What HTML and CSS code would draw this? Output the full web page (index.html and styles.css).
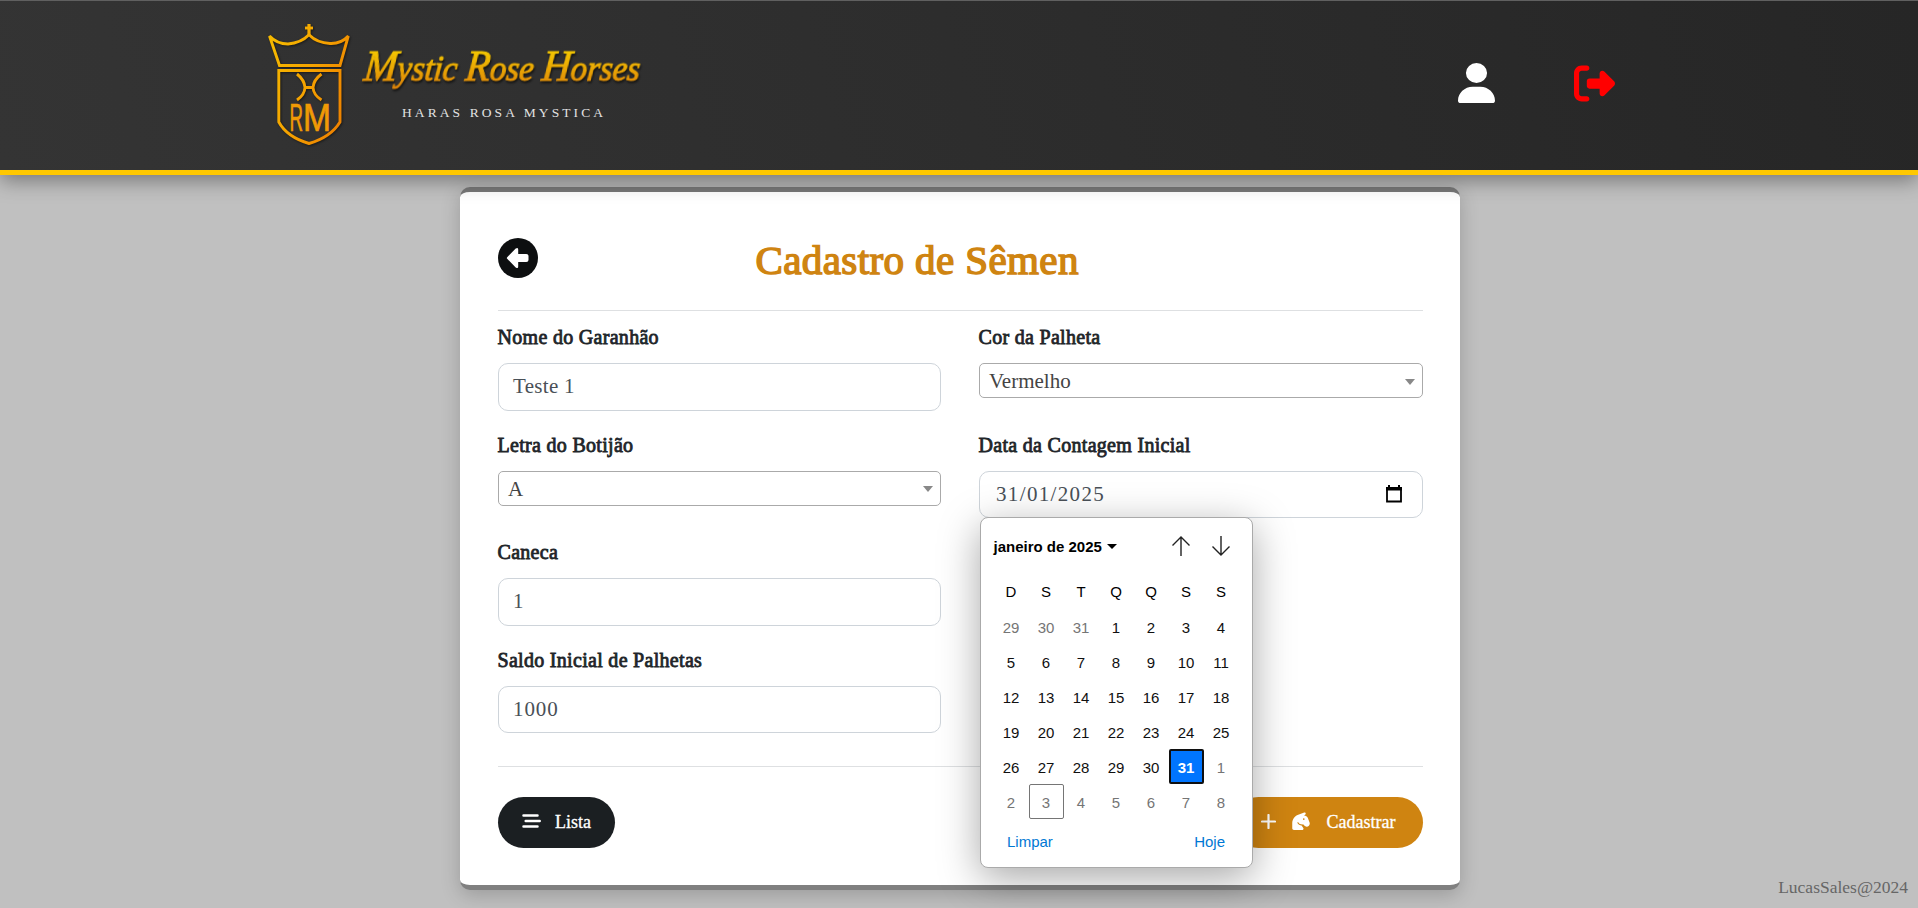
FILE: index.html
```html
<!DOCTYPE html>
<html lang="pt-BR">
<head>
<meta charset="utf-8">
<title>Cadastro de Sêmen</title>
<link rel="stylesheet" href="styles.css">
</head>
<body>
<header class="topbar">
  <svg class="logo" width="400" height="130" viewBox="260 20 400 130">
    <defs>
      <linearGradient id="gold" gradientUnits="userSpaceOnUse" x1="268" y1="60" x2="350" y2="90">
        <stop offset="0" stop-color="#f5b800"/><stop offset="0.5" stop-color="#f5a300"/><stop offset="1" stop-color="#ee8400"/>
      </linearGradient>
      <linearGradient id="goldv" x1="0" y1="0" x2="0" y2="1">
        <stop offset="0.1" stop-color="#f6cf00"/><stop offset="1" stop-color="#dd7f08"/>
      </linearGradient>
    </defs>
    <g class="crest" fill="none" stroke="url(#gold)" stroke-width="2.9">
      <path d="M269.500 36 Q277 44 288 44 Q301 43 309 34.800 Q317 43 330 43.500 Q341 44 348.300 36 L340 65.500 H279.500 Z"/>
      <path d="M278.800 70.500 H340 V122 Q331 137 309 143.500 Q287 137 278.800 122 Z"/>
      <path d="M297 74 Q304.500 80 305 87.500 Q304.500 95 297 100 M321.500 74 Q313.500 80 313 87.500 Q313.500 95 321.500 100 M305 87.500 H313"/>
      <path d="M309 24 V35" stroke-width="3.200"/><path d="M305 28 H313"/>
    </g>
    <text class="monogram" transform="translate(289.500 131) scale(1 1.750)" textLength="13.500" lengthAdjust="spacingAndGlyphs">R</text>
    <text class="monogram" transform="translate(303 131) scale(1 1.750)" textLength="28" lengthAdjust="spacingAndGlyphs">M</text>
    <text class="brand" transform="translate(363 80.500) skewX(-6)" textLength="276" lengthAdjust="spacingAndGlyphs"><tspan class="cap">M</tspan>ystic <tspan class="cap">R</tspan>ose <tspan class="cap">H</tspan>orses</text>
    <text class="tagline" x="402" y="117" textLength="201">HARAS ROSA MYSTICA</text>
  </svg>
  <nav class="actions">
    <svg width="37" height="40" viewBox="0 0 448 512" preserveAspectRatio="none" fill="#fff"><path d="M224 256A128 128 0 1 0 224 0a128 128 0 1 0 0 256zm-45.700 48C79.800 304 0 383.800 0 482.300C0 498.700 13.300 512 29.700 512H418.300c16.400 0 29.700-13.300 29.700-29.700C448 383.800 368.200 304 269.700 304H178.300z"/></svg>
    <svg width="41" height="41" viewBox="0 0 512 512" fill="#f00"><path d="M377.900 105.900L500.700 228.700c7.200 7.200 11.300 17.100 11.300 27.300s-4.100 20.100-11.300 27.300L377.900 406.100c-6.400 6.400-15 9.900-24 9.900c-18.700 0-33.900-15.200-33.900-33.900l0-62.100-128 0c-17.700 0-32-14.300-32-32l0-64c0-17.700 14.300-32 32-32l128 0 0-62.100c0-18.700 15.200-33.900 33.900-33.900c9 0 17.600 3.600 24 9.900zM160 96L96 96c-17.700 0-32 14.300-32 32l0 256c0 17.700 14.300 32 32 32l64 0c17.700 0 32 14.300 32 32s-14.300 32-32 32l-64 0c-53 0-96-43-96-96L0 128C0 75 43 32 96 32l64 0c17.700 0 32 14.300 32 32s-14.300 32-32 32z"/></svg>
  </nav>
</header>

<main class="card">
  <div class="card-head">
    <svg class="back" width="40" height="40" viewBox="0 0 40 40"><circle cx="20" cy="20" r="20" fill="#0d0f10"/><path d="M9.200 19.200 17.700 10.600Q20.200 8.800 20.200 11.500V15.900H28.300Q30.500 15.900 30.500 18V22Q30.500 24.100 28.300 24.100H20.200V28.500Q20.200 31.200 17.700 29.400L9.200 20.800Q8.400 20 9.200 19.200Z" fill="#fff"/></svg>
    <h1 class="title">Cadastro de Sêmen</h1>
  </div>
  <form class="fields">
    <div class="col">
      <div class="field"><label class="label">Nome do Garanhão</label><div class="input">Teste 1</div></div>
      <div class="field"><label class="label">Letra do Botijão</label><div class="select">A</div></div>
      <div class="field"><label class="label">Caneca</label><div class="input">1</div></div>
      <div class="field"><label class="label">Saldo Inicial de Palhetas</label><div class="input short">1000</div></div>
    </div>
    <div class="col">
      <div class="field"><label class="label">Cor da Palheta</label><div class="select">Vermelho</div></div>
      <div class="field"><label class="label">Data da Contagem Inicial</label>
        <div class="input date">31/01/2025
          <svg width="16" height="18" viewBox="0 0 16 18"><path d="M1 3H15V16.500H1Z" fill="none" stroke="#000" stroke-width="1.800"/><path d="M0 2H16V5.500H0ZM2 0H4V3H2ZM12 0H14V3H12Z"/></svg>
        </div>
        <div class="picker">
          <div class="picker-head">
            <span class="month">janeiro de 2025</span><i class="caret"></i>
            <svg class="up" width="18" height="20" viewBox="0 0 18 20"><path d="M9 20V1M.500 9.500 9 1 17.500 9.500"/></svg>
            <svg width="18" height="20" viewBox="0 0 18 20"><path d="M9 0V19M.500 10.500 9 19 17.500 10.500"/></svg>
          </div>
          <div class="week">
            <span>D</span><span>S</span><span>T</span><span>Q</span><span>Q</span><span>S</span><span>S</span>
          </div>
          <div class="days">
            <span class="off">29</span><span class="off">30</span><span class="off">31</span><span>1</span><span>2</span><span>3</span><span>4</span>
            <span>5</span><span>6</span><span>7</span><span>8</span><span>9</span><span>10</span><span>11</span>
            <span>12</span><span>13</span><span>14</span><span>15</span><span>16</span><span>17</span><span>18</span>
            <span>19</span><span>20</span><span>21</span><span>22</span><span>23</span><span>24</span><span>25</span>
            <span>26</span><span>27</span><span>28</span><span>29</span><span>30</span><span class="chosen">31</span><span class="off">1</span>
            <span class="off">2</span><span class="off today">3</span><span class="off">4</span><span class="off">5</span><span class="off">6</span><span class="off">7</span><span class="off">8</span>
          </div>
          <div class="picker-foot"><span>Limpar</span><span>Hoje</span></div>
        </div>
      </div>
    </div>
  </form>
  <div class="card-foot">
    <div class="btn dark">
      <svg width="19" height="14" viewBox="0 0 19 14" stroke="#fff" stroke-width="2.500" stroke-linecap="round"><path d="M1.500 1.500H15.500M3.700 7H17.700M1.500 12.500H15.500"/></svg>
      <span>Lista</span>
    </div>
    <div class="btn gold">
      <svg width="15" height="15" viewBox="0 0 15 15" stroke="#fff" stroke-width="2.200" stroke-linecap="round"><path d="M7.500 1V14M1 7.500H14"/></svg>
      <svg class="horse" width="22.500" height="18" viewBox="0 0 640 512" fill="#fff"><path d="M64 464l0-147.100c0-108.400 68.300-205.100 170.500-241.300L404.200 15.500C425.600 7.900 448 23.800 448 46.400c0 11-5.500 21.200-14.600 27.300L400 96c48.100 0 91.200 29.800 108.100 74.900l48.600 129.500c11.800 31.400 4.100 66.800-19.600 90.500c-16 16-37.800 25.100-60.500 25.100l-3.400 0c-26.100 0-50.900-11.600-67.600-31.500l-32.300-38.700c-11.700 4.100-24.200 6.400-37.300 6.400c-6.300 0-12.500-.500-18.600-1.500c-3.600-.600-7.200-1.400-10.700-2.300c-28.900-7.800-53.100-26.800-67.800-52.200c-4.400-7.600-14.200-10.300-21.900-5.800s-10.300 14.200-5.800 21.900c24 41.500 68.300 70 119.300 71.900l47.200 70.800c4 6.100 6.200 13.200 6.200 20.400c0 20.300-16.500 36.800-36.800 36.800L112 512c-26.500 0-48-21.500-48-48zM392 224a24 24 0 1 0 0-48 24 24 0 1 0 0 48z"/></svg>
      <span>Cadastrar</span>
    </div>
  </div>
</main>
<footer class="credit">LucasSales@2024</footer>
</body>
</html>
```
FILE: styles.css
```css
* { box-sizing: border-box; }
body {
  margin: 0;
  height: 908px;
  overflow: hidden;
  background: #c0c0c0;
  font-family: "Liberation Serif", serif;
  color: #212529;
}
.topbar {
  position: relative;
  height: 175px;
  display: flex;
  justify-content: space-between;
  align-items: flex-start;
  padding: 19px 303px 0 260px;
  border-top: 1px solid #606060;
  border-bottom: 5px solid #ffc800;
  background: linear-gradient(75deg, #343434, #262626);
  box-shadow: 0 5px 20px rgba(0, 0, 0, .4);
  z-index: 1;
}
.crest { filter: drop-shadow(1px 1px 1px #1a1a1a); }
.brand {
  font: italic 400 36px "Liberation Serif", serif;
  fill: url(#goldv);
  stroke: url(#goldv);
  stroke-width: 1.100px;
  filter: drop-shadow(1px 2px 1px #111);
}
.cap { font-size: 44px; }
.monogram { font: 22px "Liberation Sans", sans-serif; fill: #f09a05; stroke: #f09a05; stroke-width: .400px; }
.tagline { font: 13.500px "Liberation Serif", serif; fill: #e2e2e2; }
.actions { display: flex; gap: 79px; padding-top: 43px; }

.card {
  width: 1000px;
  height: 703px;
  margin: 12px 0 0 460px;
  padding: 0 37px 0 38px;
  background: #fff;
  border-top: 5px solid #787878;
  border-bottom: 5px solid #808080;
  border-radius: 10px;
  box-shadow: 0 5px 20px rgba(0, 0, 0, .2);
}
.card-head {
  display: flex;
  height: 119px;
  padding-top: 46px;
  border-bottom: 1px solid #dee0e2;
}
.back { margin-left: -.500px; }
.title {
  margin: -1px 0 0 218px;
  font-size: 41px;
  line-height: 46px;
  font-weight: 400;
  letter-spacing: .400px;
  color: #cf8411;
  -webkit-text-stroke: 1.500px #cf8411;
}
.fields {
  display: grid;
  grid-template-columns: 443px 444px;
  column-gap: 38px;
  height: 455px;
  padding-top: 11px;
}
.col { display: grid; grid-auto-rows: 107.700px; align-content: start; }
.field { position: relative; }
.label {
  display: block;
  height: 30px;
  margin-bottom: 11px;
  font-size: 20px;
  line-height: 31px;
  letter-spacing: .300px;
  text-indent: -.500px;
  white-space: nowrap;
  -webkit-text-stroke: .800px #212529;
}
.input, .select { font-size: 21px; color: #495057; border: 1px solid #ced4da; }
.input {
  height: 48px;
  padding: 0 14px;
  border-radius: 10px;
  line-height: 44px;
  letter-spacing: .300px;
}
.input.short { height: 47px; letter-spacing: .900px; }
.input.date {
  display: flex;
  justify-content: space-between;
  align-items: center;
  height: 47px;
  padding: 0 20px 0 16px;
  line-height: 41px;
  letter-spacing: 1.350px;
}
.select {
  display: flex;
  justify-content: space-between;
  align-items: center;
  height: 35px;
  padding: 2px 7px 0 9px;
  border-color: #aaa;
  border-radius: 5px;
  color: #444;
}
.select::after { content: ""; border: 5px solid transparent; border-top: 6px solid #888; border-bottom: 0; }

.picker {
  position: absolute;
  top: 87px;
  left: 1px;
  width: 273px;
  height: 351px;
  padding: 0 12px 0 12.500px;
  background: #fff;
  border: 1px solid #aaa;
  border-radius: 8px;
  box-shadow: 0 10px 40px rgba(0, 0, 0, .35);
  font: 15px "Liberation Sans", sans-serif;
  color: #101010;
}
.picker-head { display: flex; align-items: center; height: 57px; font-weight: 700; color: #000; }
.caret { margin-left: 5px; border: 5px solid transparent; border-top-color: #000; border-bottom: 0; }
.picker-head svg { fill: none; stroke: #222; stroke-width: 1.400; margin-right: 10px; }
.picker-head .up { margin: 0 22px 0 auto; }
.week, .days { display: grid; grid-template-columns: repeat(7, 35px); text-align: center; }
.week { height: 34px; line-height: 33px; color: #000; }
.days { grid-auto-rows: 35px; line-height: 37px; }
.off { color: #757575; }
.chosen { background: #0075ff; color: #fff; font-weight: 700; border: 2px solid #101010; border-radius: 2px; line-height: 33px; }
.today { border: 1px solid #757575; border-radius: 2px; line-height: 35px; }
.picker-foot { display: flex; justify-content: space-between; padding: 14px 15px 0 13.500px; color: #0078d4; }

.card-foot {
  display: flex;
  justify-content: space-between;
  padding-top: 30px;
  border-top: 1px solid #dee0e2;
}
.btn {
  display: flex;
  align-items: center;
  height: 51px;
  padding-bottom: 1px;
  border-radius: 26px;
  color: #fff;
  font-size: 18px;
  -webkit-text-stroke: .300px #fff;
}
.btn svg { margin-bottom: 2px; }
.dark { width: 117px; padding-left: 24px; gap: 14px; background: #1b1f22; }
.gold { width: 190px; padding-left: 28px; background: #cf8411; }
.gold .horse { margin: 0 14px 2px 14px; }
.credit {
  width: 1908px;
  margin-top: -13px;
  text-align: right;
  font-size: 17.500px;
  line-height: 20px;
  color: #666;
}
```
